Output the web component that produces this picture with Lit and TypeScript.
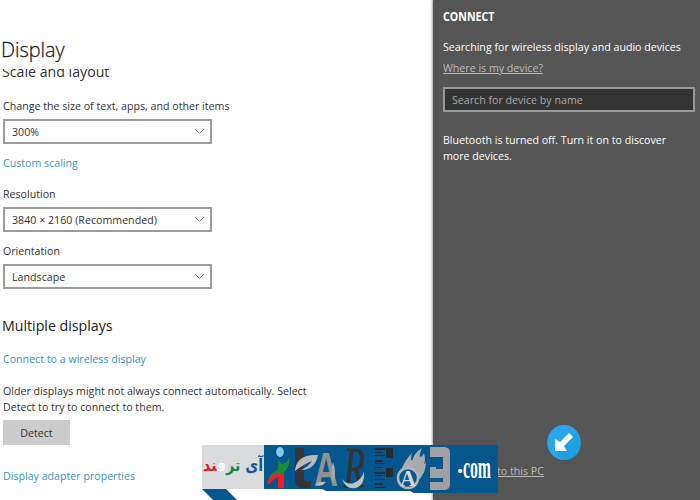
import { LitElement, html, css, svg } from "lit";
import { customElement, property } from "lit/decorators.js";

@customElement("select-box")
class SelectBox extends LitElement {
  @property() value = "";
  static styles = css`
    :host { display: block; }
    .box { box-sizing: border-box; width: 209.4px; height: 25px; border: 2px solid #9c9c9c; display: flex; align-items: center; justify-content: space-between; padding: 0 5px 0 7px; background: #fff; color: #333; line-height: 15px; }
    .value { transform: scaleX(.927); transform-origin: 0 50%; }
    svg { display: block; }
  `;
  render() {
    return html`<div class="box"><span class="value">${this.value}</span>
      <svg width="11" height="7" viewBox="0 0 11 7" fill="none" stroke="#777" stroke-width="1"><path d="M1 1l4.5 4.5L10 1" /></svg>
    </div>`;
  }
}

@customElement("brand-banner")
class BrandBanner extends LitElement {
  static styles = css`
    :host { display: block; }
    .name { font: bold 17px "DejaVu Sans", sans-serif; }
    .serif { font-family: "Liberation Serif", serif; font-weight: bold; }
    .sans { font-family: "Liberation Sans", sans-serif; font-weight: bold; }
    svg { display: block; }
  `;
  render() {
    const bars = [0, 4, 7, 12, 15, 19, 24, 27, 31, 35, 39];
    return html`<svg width="296" height="55" viewBox="202 445 296 55">
      <rect x="202" y="445" width="62" height="44" fill="#dadbdd" />
      <path d="M264 445H498V493H414L410 491H326L322 489H264Z" fill="#05568d" />
      <path d="M202 489H226L237 500H213Z" fill="#05568d" />
      <text class="name" x="263" y="471" direction="rtl" textLength="60" lengthAdjust="spacingAndGlyphs"><tspan fill="#145a91">آی </tspan><tspan fill="#168345">تر</tspan><tspan fill="#fff">ف</tspan><tspan fill="#d91f36">ند</tspan></text>
      <ellipse cx="280" cy="452" rx="3.800" ry="5" fill="#83c8e8" />
      <path d="M278 459q2 4 4 5 6-1 7-7 2 9-5 15 0 5-2 9l-5-5 1-3-10 7q2-6 9-10 2-5 1-11Z" fill="#188b3b" />
      <path d="M268 481q3-6 9-8 7 0 7 4v11h-6v-11q-6 3-9 8-2-2-1-4" fill="#f01e28" />
      <path d="M295 448h9v31q2 5 7 2v6q-15 4-16-6Z" fill="#343438" />
      <path d="M295 471q1-17 23-16-3 15-17 15 7-3 11-9-8 3-17 10" fill="#b9b9bb" />
      <text x="314" y="486" class="sans" font-size="49" fill="#929294" textLength="24" lengthAdjust="spacingAndGlyphs">A</text>
      <path d="M333 482q-3-9 0-20 4 10 0 20" fill="#a9abae" />
      <path d="M326 482q-7-1-10 2 5 4 10-2" fill="#b9b9bb" />
      <text x="344" y="487" font-family="Liberation Serif" font-style="italic" font-size="56" fill="#303236" stroke="#303236" stroke-width=".8" textLength="21" lengthAdjust="spacingAndGlyphs">R</text>
      <path d="M342 479q5 6 12 4 7-3 10-11 1 13-8 16-10 2-14-9" fill="#b9c3c8" />
      <g fill="#252a2e">${bars.map((y, i) => svg`<rect x="375" y=${448 + y} width=${i % 2 ? 8 : 10} height=${i % 3 ? 1 : 2} />`)}
        <rect x="386" y="448" width="7" height="10" /><rect x="386" y="468" width="7" height="9" /></g>
      <path d="M402 468q4-9 10-15-2 6 0 8 2-8 10-13-3 7-2 9 3-1 4-4 2 7 0 11 1 0 2-2 0 11-8 19l-4 5q1-12-12-18" fill="#a9abae" />
      <circle cx="408" cy="478" r="10" fill="#05568d" stroke="#b5b5b7" stroke-width="2.500" />
      <text x="400" y="486" class="serif" font-size="23" fill="#d5d5d7" textLength="16" lengthAdjust="spacingAndGlyphs">A</text>
      <path d="M430 447h14q6 0 6 6v31q0 6-6 6h-14v-8h13v-4h-13v-11h6v2h7v-12h-13Z" fill="#a0a0a2" />
      <text x="457" y="473" class="serif" font-size="25" fill="#fff">.</text>
      <text x="463" y="478" class="serif" font-size="31" fill="#fff" textLength="28" lengthAdjust="spacingAndGlyphs">com</text>
    </svg>`;
  }
}

@customElement("app-root")
class AppRoot extends LitElement {
  static styles = css`
    :host { display: grid; grid-template-columns: 433px 267px; position: relative; width: 700px; height: 500px; overflow: hidden; background: #fff; color: #333; font: 11.5px/16px "Open Sans", "Noto Sans", sans-serif; }
    .main { padding: 36px 0 0 3px; box-sizing: border-box; }
    .title, .crop, .multi, .t { width: max-content; transform: scaleX(.925); transform-origin: 0 50%; }
    .title, .crop, .multi { transform: scaleX(.945); }
    .title { font-size: 21px; line-height: 27px; height: 33px; margin-left: -2px; font-weight: 300; color: #222; -webkit-text-stroke: .3px #222; }
    .crop { height: 13px; overflow: hidden; display: flex; align-items: flex-end; font-size: 15px; line-height: 22px; margin-left: -1px; }
    .label { height: 16px; }
    .link { color: #3a94b8; }
    .size { margin-top: 16px; margin-bottom: 5px; }
    .scaling { margin-top: 11px; }
    .res { margin-top: 15px; margin-bottom: 5px; }
    .orient { margin-top: 11px; margin-bottom: 5px; }
    .multi { font-size: 15px; line-height: 20px; margin: 26px 0 0 -1px; color: #222; }
    .wireless { margin-top: 16px; }
    .older { margin-top: 16px; white-space: pre; }
    .button { width: 67px; height: 25px; background: #ccc; margin-top: 5px; display: flex; align-items: center; justify-content: center; }
    .button .t { transform-origin: 50% 50%; }
    .adapter { margin-top: 23px; }
    .panel { position: relative; background: #555; box-shadow: -1px 0 2px #aaa; color: #fff; padding: 9px 5px 0 10px; box-sizing: border-box; }
    .head { font-weight: bold; }
    .searching { margin-top: 14px; white-space: nowrap; }
    .under { color: #bbb; text-decoration: underline; }
    .where { margin-top: 5px; }
    .search { height: 25px; border: 2px solid #999; background: #333; color: #aaa; box-sizing: border-box; margin-top: 11px; padding-left: 7px; display: flex; align-items: center; }
    .blue { margin-top: 20px; white-space: pre; }
    .project { margin: 299px 0 0 54px; }
    .banner { position: absolute; left: 202px; top: 445px; }
    .cursor { position: absolute; left: 547px; top: 425px; }
  `;
  render() {
    return html`
      <div class="main">
        <div class="title">Display</div>
        <div class="crop"><span>Scale and layout</span></div>
        <div class="t label size">Change the size of text, apps, and other items</div>
        <select-box value="300%"></select-box>
        <div class="t link scaling">Custom scaling</div>
        <div class="t label res">Resolution</div>
        <select-box value="3840 × 2160 (Recommended)"></select-box>
        <div class="t label orient">Orientation</div>
        <select-box value="Landscape"></select-box>
        <div class="multi">Multiple displays</div>
        <div class="t link wireless">Connect to a wireless display</div>
        <div class="t older">Older displays might not always connect automatically. Select
Detect to try to connect to them.</div>
        <div class="button"><span class="t">Detect</span></div>
        <div class="t link adapter">Display adapter properties</div>
      </div>
      <div class="panel">
        <div class="t head">CONNECT</div>
        <div class="t searching">Searching for wireless display and audio devices</div>
        <div class="t under where">Where is my device?</div>
        <div class="search"><span class="t">Search for device by name</span></div>
        <div class="t blue">Bluetooth is turned off. Turn it on to discover
more devices.</div>
        <div class="t under project">to this PC</div>
      </div>
      <brand-banner class="banner"></brand-banner>
      <svg class="cursor" width="34" height="35" viewBox="0 0 34 35">
        <ellipse cx="17" cy="17.500" rx="16.800" ry="17.500" fill="#28a8ea" />
        <path d="M9 15v14L29 7l5 11q-1 17-17 17l-9-7Z" fill="#1899d8" opacity=".6" />
        <path d="M22 8l4 4-9 9 3 5H8V14l5 3Z" fill="#fff" />
      </svg>`;
  }
}
